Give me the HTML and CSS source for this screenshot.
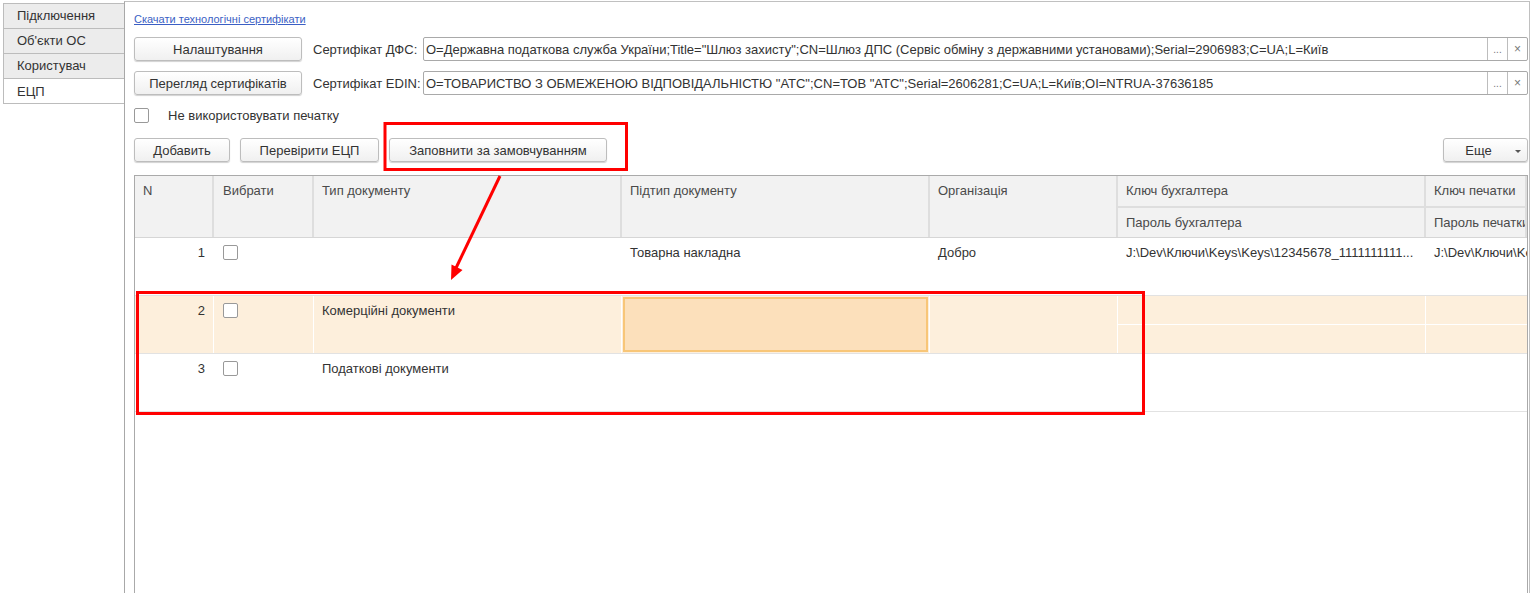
FILE: index.html
```html
<!DOCTYPE html>
<html lang="uk">
<head>
<meta charset="utf-8">
<title>ЕЦП</title>
<link rel="stylesheet" href="styles.css">
</head>
<body>
<div class="app">
  <nav class="tabs">
    <div class="tab">Підключення</div>
    <div class="tab">Об'єкти ОС</div>
    <div class="tab">Користувач</div>
    <div class="tab active">ЕЦП</div>
  </nav>
  <main class="panel">
    <a class="link" href="#">Скачати технологічні сертифікати</a>
    <div class="field-row">
      <button class="btn btn-wide">Налаштування</button>
      <span class="label">Сертифікат ДФС:</span>
      <div class="input">
        <span class="input-text">O=Державна податкова служба України;Title="Шлюз захисту";CN=Шлюз ДПС (Сервіс обміну з державними установами);Serial=2906983;C=UA;L=Київ</span>
        <span class="ib">...</span>
        <span class="ib ix">×</span>
      </div>
    </div>
    <div class="field-row">
      <button class="btn btn-wide">Перегляд сертифікатів</button>
      <span class="label">Сертифікат EDIN:</span>
      <div class="input">
        <span class="input-text">O=ТОВАРИСТВО З ОБМЕЖЕНОЮ ВІДПОВІДАЛЬНІСТЮ "АТС";CN=ТОВ "АТС";Serial=2606281;C=UA;L=Київ;OI=NTRUA-37636185</span>
        <span class="ib">...</span>
        <span class="ib ix">×</span>
      </div>
    </div>
    <label class="check-row"><span class="cb"></span><span>Не використовувати печатку</span></label>
    <div class="toolbar">
      <button class="btn b-add">Добавить</button>
      <button class="btn b-check">Перевірити ЕЦП</button>
      <button class="btn b-fill">Заповнити за замовчуванням</button>
      <button class="btn b-more">Еще<span class="caret"></span></button>
    </div>
    <div class="grid">
      <div class="row head">
        <div class="c">N</div>
        <div class="c">Вибрати</div>
        <div class="c">Тип документу</div>
        <div class="c">Підтип документу</div>
        <div class="c">Організація</div>
        <div class="c split"><div class="sc">Ключ бухгалтера</div><div class="sc">Пароль бухгалтера</div></div>
        <div class="c split last"><div class="sc">Ключ печатки</div><div class="sc">Пароль печатки</div></div>
      </div>
      <div class="row">
        <div class="c num">1</div>
        <div class="c"><span class="cb"></span></div>
        <div class="c"></div>
        <div class="c">Товарна накладна</div>
        <div class="c">Добро</div>
        <div class="c split"><div class="sc">J:\Dev\Ключи\Keys\Keys\12345678_1111111111...</div><div class="sc"></div></div>
        <div class="c split last"><div class="sc">J:\Dev\Ключи\Keys\Keys\12345678</div><div class="sc"></div></div>
      </div>
      <div class="row sel">
        <div class="c num">2</div>
        <div class="c"><span class="cb"></span></div>
        <div class="c">Комерційні документи</div>
        <div class="c cur"><div class="cur-box"></div></div>
        <div class="c"></div>
        <div class="c split"><div class="sc"></div><div class="sc"></div></div>
        <div class="c split last"><div class="sc"></div><div class="sc"></div></div>
      </div>
      <div class="row">
        <div class="c num">3</div>
        <div class="c"><span class="cb"></span></div>
        <div class="c">Податкові документи</div>
        <div class="c"></div>
        <div class="c"></div>
        <div class="c split"><div class="sc"></div><div class="sc"></div></div>
        <div class="c split last"><div class="sc"></div><div class="sc"></div></div>
      </div>
    </div>
  </main>
</div>
<svg class="annot" width="1539" height="593" viewBox="0 0 1539 593">
  <rect x="385" y="123.5" width="241.5" height="46" fill="none" stroke="#ff0000" stroke-width="3"/>
  <rect x="137.5" y="292.5" width="1006" height="121" fill="none" stroke="#ff0000" stroke-width="3"/>
  <line x1="500" y1="176" x2="456" y2="268" stroke="#ff0000" stroke-width="3"/>
  <polygon points="451,280 462.5,270 451.5,264.5" fill="#ff0000"/>
</svg>
</body>
</html>
```
FILE: styles.css
```css
* { box-sizing: border-box; }
body {
  margin: 0;
  background: #fff;
  font-family: "Liberation Sans", Arial, sans-serif;
  font-size: 13px;
  color: #333;
  overflow: hidden;
}
.app {
  display: flex;
  height: 593px;
  width: 1539px;
}
.tabs {
  width: 124px;
  padding: 3px 0 0 3px;
  flex: none;
}
.tab {
  height: 26px;
  padding: 4px 0 0 13px;
  background: #ececec;
  border: 1px solid #bcbcbc;
  border-right: none;
  margin-bottom: -1px;
  color: #333;
}
.tab.active {
  background: #fff;
  padding-top: 5px;
}
.panel {
  flex: none;
  width: 1406px;
  margin-top: 1px;
  border-left: 1px solid #a8a8a8;
  border-top: 1px solid #c0c0c0;
  border-right: 1px solid #c0c0c0;
  padding: 10px 1px 0 9px;
  display: flex;
  flex-direction: column;
}
.link {
  font-size: 11px;
  color: #3b5fc4;
  text-decoration: underline;
  height: 16px;
  line-height: 14px;
  align-self: flex-start;
}
.field-row {
  display: flex;
  align-items: center;
  height: 24px;
  margin-top: 9px;
}
.field-row + .field-row { margin-top: 10px; }
.btn {
  font: inherit;
  color: #333;
  height: 24px;
  border: 1px solid #bdbdbd;
  border-radius: 3px;
  background: linear-gradient(#ffffff, #f0f0f0);
  box-shadow: 0 1px 1px rgba(0,0,0,0.18);
  padding: 0;
  cursor: default;
}
.btn-wide { width: 168px; flex: none; }
.label {
  margin-left: 11px;
  width: 110px;
  flex: none;
  white-space: nowrap;
}
.input {
  flex: 1;
  display: flex;
  height: 24px;
  border: 1px solid #a9a9a9;
  border-radius: 2px;
  background: #fff;
  overflow: hidden;
}
.input-text {
  flex: 1;
  padding: 4px 0 0 2px;
  white-space: nowrap;
  overflow: hidden;
}
.ib {
  width: 20px;
  flex: none;
  border-left: 1px solid #bdbdbd;
  color: #777;
  font-size: 10px;
  text-align: center;
  padding-top: 6px;
}
.ix { font-size: 12px; padding-top: 4px; }
.check-row {
  display: flex;
  align-items: center;
  height: 16px;
  margin-top: 12px;
}
.check-row .cb { margin-right: 19px; }
.cb {
  display: inline-block;
  width: 15px;
  height: 15px;
  border: 1px solid #999;
  border-radius: 2px;
  background: #fff;
  flex: none;
}
.toolbar {
  display: flex;
  height: 24px;
  margin-top: 15px;
}
.b-add { width: 96px; }
.b-check { width: 139px; margin-left: 10px; }
.b-fill { width: 218px; margin-left: 10px; }
.b-more {
  width: 85px;
  margin-left: auto;
  position: relative;
  padding-right: 14px;
}
.caret {
  position: absolute;
  right: 6px;
  top: 11px;
  border-left: 3px solid transparent;
  border-right: 3px solid transparent;
  border-top: 3px solid #555;
}
.grid {
  margin-top: 13px;
  flex: 1;
  border: 1px solid #aaa;
  border-bottom: none;
  overflow: hidden;
}
.row {
  display: grid;
  grid-template-columns: 79px 100px 308px 308px 188px 308px 1fr;
  height: 58px;
  border-bottom: 1px solid #e2e2e2;
  white-space: nowrap;
}
.row .c {
  padding: 7px 8px 0 8px;
  border-right: 1px solid #fff;
  overflow: hidden;
}
.row .c.last { border-right: none; }
.row .c.split {
  padding: 0;
  display: flex;
  flex-direction: column;
}
.sc {
  flex: 1;
  padding: 7px 8px 0 8px;
  overflow: hidden;
}
.sc + .sc { border-top: 1px solid #fff; }
.num { text-align: right; }
.row .c:nth-child(2) { padding-left: 9px; padding-top: 7px; }
.head {
  height: 62px;
  background: #f2f2f2;
  border-bottom: 1px solid #d6d6d6;
  color: #4a4a4a;
}
.head .c {
  padding-top: 7px;
  border-right: 2px solid #dedede;
}
.head .c.split { border-right: 2px solid #dedede; }
.head .sc { padding-top: 7px; }
.head .sc + .sc { border-top: 2px solid #dedede; }
.sel {
  background: #fdefdc;
}
.c.cur { padding: 1px; }
.cur-box {
  height: 100%;
  background: #fce0bb;
  border: 2px solid #f8c678;
}
.annot {
  position: absolute;
  left: 0;
  top: 0;
  pointer-events: none;
}
```
